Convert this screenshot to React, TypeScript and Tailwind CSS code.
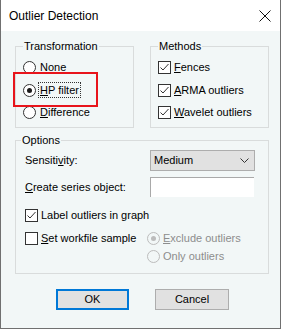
import React from "react";

const BG = "bg-[#f2f7f7]";

function Radio({ checked = false, disabled = false }: { checked?: boolean; disabled?: boolean }) {
  return (
    <span
      className={`relative inline-block w-[13px] h-[13px] rounded-full border shrink-0 ${
        disabled ? "border-[#bcbcbc] bg-[#f2f7f7]" : "border-[#333333] bg-white"
      }`}
    >
      {checked && (
        <span
          className={`absolute left-[3px] top-[3px] w-[5px] h-[5px] rounded-full ${
            disabled ? "bg-[#bcbcbc]" : "bg-[#1a1a1a]"
          }`}
        />
      )}
    </span>
  );
}

function Check({ checked = false }: { checked?: boolean }) {
  return (
    <span className="relative inline-block w-[13px] h-[13px] border border-[#333333] bg-white shrink-0">
      {checked && (
        <svg width="11" height="11" viewBox="0 0 11 11" className="absolute left-0 top-0">
          <polyline points="1.5,5.5 4,8 9.5,2" fill="none" stroke="#333333" strokeWidth="1" />
        </svg>
      )}
    </span>
  );
}

function Group({
  label,
  labelLeft,
  className,
  children,
}: {
  label: string;
  labelLeft: string;
  className: string;
  children: React.ReactNode;
}) {
  return (
    <div className={`relative border border-[#d9dcdc] ${className}`}>
      <span className={`absolute -top-[8px] ${labelLeft} px-[1px] leading-[14px] ${BG}`}>{label}</span>
      {children}
    </div>
  );
}

export default function App() {
  return (
    <div
      className={`w-[281px] h-[329px] flex flex-col border-x border-b border-[#707070] ${BG} text-[11px] text-black`}
      style={{ fontFamily: '"Liberation Sans", Arial, sans-serif' }}
    >
      {/* Title bar */}
      <div className="h-[31px] shrink-0 bg-white flex items-center justify-between pl-[8px] pr-[9px]">
        <span className="text-[12px] leading-[14px]">Outlier Detection</span>
        <svg width="12" height="12" viewBox="0 0 12 12">
          <line x1="0.5" y1="0.5" x2="11.5" y2="11.5" stroke="#111" strokeWidth="1" />
          <line x1="11.5" y1="0.5" x2="0.5" y2="11.5" stroke="#111" strokeWidth="1" />
        </svg>
      </div>

      {/* Body */}
      <div className="flex-1 pl-[14px] pr-[11px] pt-[15px]">
        <div className="flex gap-[16px]">
          <Group label="Transformation" labelLeft="left-[7px]" className="w-[119px] h-[82px]">
            <div className="flex flex-col pl-[7px] pt-[10px]">
              <div className="h-[20px] flex items-center gap-[4px]">
                <Radio />
                <span>
                  <u>N</u>one
                </span>
              </div>
              <div className="h-[20px] mt-[3px] flex items-center gap-[2px]">
                <Radio checked />
                <span className="border border-dotted border-[#333] px-[1px] leading-[14px]">
                  <u>H</u>P filter
                </span>
              </div>
              <div className="h-[20px] mt-[2px] flex items-center gap-[4px]">
                <Radio />
                <span>
                  <u>D</u>ifference
                </span>
              </div>
            </div>
            <div className="absolute left-[-3px] top-[25px] w-[85px] h-[35px] border-2 border-[#e8141b]" />
          </Group>

          <Group label="Methods" labelLeft="left-[7px]" className="w-[119px] h-[82px]">
            <div className="flex flex-col pl-[7px] pt-[10px]">
              <div className="h-[20px] flex items-center gap-[3px]">
                <Check checked />
                <span>
                  <u>F</u>ences
                </span>
              </div>
              <div className="h-[20px] mt-[3px] flex items-center gap-[3px]">
                <Check checked />
                <span>
                  <u>A</u>RMA outliers
                </span>
              </div>
              <div className="h-[20px] mt-[2px] flex items-center gap-[3px]">
                <Check checked />
                <span>
                  <u>W</u>avelet outliers
                </span>
              </div>
            </div>
          </Group>
        </div>

        <Group label="Options" labelLeft="left-[5px]" className="mt-[12px] w-[254px] h-[134px]">
          <div className="flex flex-col pl-[9px] pt-[9px]">
            <div className="flex items-center h-[21px]">
              <span className="w-[125px]">
                Sensiti<u>v</u>ity:
              </span>
              <div className="w-[105px] h-[21px] bg-[#e1e1e1] border border-[#adadad] flex items-center justify-between pl-[3px] pr-[5px]">
                <span>Medium</span>
                <svg width="9" height="5" viewBox="0 0 9 5">
                  <polyline points="0.5,0.5 4.5,4.5 8.5,0.5" fill="none" stroke="#333" strokeWidth="1" />
                </svg>
              </div>
            </div>
            <div className="flex items-center h-[20px] mt-[6px]">
              <span className="w-[125px]">
                <u>C</u>reate series object:
              </span>
              <div className="w-[104px] h-[20px] bg-white border-t border-l border-[#a9a9a9]" />
            </div>
            <div className="flex items-center h-[20px] mt-[8px] gap-[3px]">
              <Check checked />
              <span>Label outliers in graph</span>
            </div>
            <div className="flex mt-[3px]">
              <div className="w-[122px] h-[20px] flex items-center gap-[3px]">
                <Check />
                <span>
                  <u>S</u>et workfile sample
                </span>
              </div>
              <div className="flex flex-col pt-[1px] text-[#8d8d8d]">
                <div className="h-[18px] flex items-center gap-[3px]">
                  <Radio checked disabled />
                  <span>
                    <u>E</u>xclude outliers
                  </span>
                </div>
                <div className="h-[18px] flex items-center gap-[3px]">
                  <Radio disabled />
                  <span>Only outliers</span>
                </div>
              </div>
            </div>
          </div>
        </Group>

        <div className="flex gap-[26px] pl-[41px] mt-[15px]">
          <button className="w-[73px] h-[21px] bg-[#e1e1e1] border-2 border-[#0078d7] flex items-center justify-center">
            OK
          </button>
          <button className="w-[74px] h-[21px] bg-[#e1e1e1] border border-[#adadad] flex items-center justify-center">
            Cancel
          </button>
        </div>
      </div>
    </div>
  );
}
